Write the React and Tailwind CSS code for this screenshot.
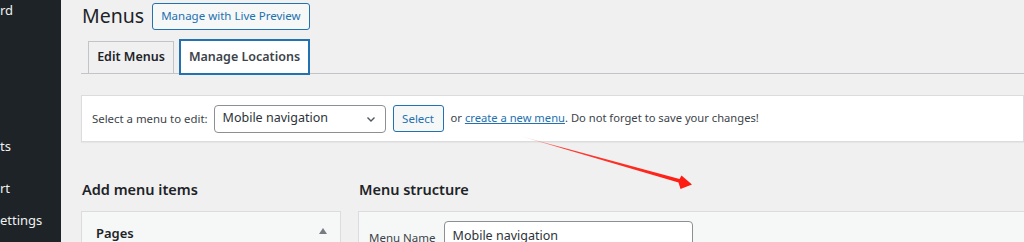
import React from "react";

const font = { fontFamily: '"Noto Sans", "Open Sans", sans-serif' };

function Sidebar() {
  return (
    <div className="relative w-[61px] shrink-0 overflow-hidden bg-[#1d2327] text-[13px] text-[#f0f0f1]">
      <div className="absolute left-0 top-[2px] leading-[16px]">rd</div>
      <div className="absolute left-0 top-[138px] leading-[16px]">ts</div>
      <div className="absolute left-0 top-[180px] leading-[16px]">rt</div>
      <div className="absolute left-0 top-[212px] leading-[16px]">ettings</div>
    </div>
  );
}

function Arrow() {
  return (
    <svg className="pointer-events-none absolute left-0 top-0" width="1024" height="242" viewBox="0 0 1024 242">
      <defs>
        <linearGradient id="ag" x1="520" y1="136" x2="692" y2="184" gradientUnits="userSpaceOnUse">
          <stop offset="0" stopColor="#ff3b2f" stopOpacity="0.15" />
          <stop offset="0.25" stopColor="#ff2a1f" stopOpacity="0.9" />
          <stop offset="1" stopColor="#ff1a10" />
        </linearGradient>
      </defs>
      <path d="M520,136 L679.5,179 L681.5,175.5 L692,184.5 L680.5,189 L678.5,182.5 Z" fill="url(#ag)" />
    </svg>
  );
}

export default function App() {
  return (
    <div className="relative flex h-[242px] w-[1024px] overflow-hidden bg-[#f0f0f1]" style={font}>
      <Sidebar />
      <div className="flex min-w-0 flex-1 flex-col pl-[20px]">
        {/* title row */}
        <div className="flex h-[32px] shrink-0 items-center">
          <h1 className="ml-[1px] text-[19.5px] leading-[24px] font-normal text-[#1d2327]">Menus</h1>
          <button className="ml-[8px] h-[27px] rounded-[3px] border border-[#2271b1] bg-[#f6f7f7] px-[8px] text-[11.5px] text-[#2271b1]">
            Manage with Live Preview
          </button>
        </div>
        {/* tabs */}
        <div className="mt-[7px] flex h-[35px] shrink-0 items-end border-b border-[#c3c4c7] pl-[7px]">
          <div className="mb-[-1px] flex h-[33px] w-[86px] items-center justify-center border border-[#c3c4c7] bg-[#f0f0f1] text-[12.5px] font-semibold text-[#1d2327]">
            Edit Menus
          </div>
          <div className="mb-[-2px] ml-[5px] flex h-[36px] w-[131px] items-center justify-center border-2 border-[#2271b1] bg-white text-[12.5px] font-semibold text-[#3c434a]">
            Manage Locations
          </div>
        </div>
        {/* select panel */}
        <div className="mt-[21px] flex h-[47px] shrink-0 items-center border border-[#dcdcde] bg-white pl-[10px] text-[11.4px] text-[#3c434a] shadow-[0_1px_1px_rgba(0,0,0,0.04)]">
          <span>Select a menu to edit:</span>
          <div className="ml-[6px] flex h-[28px] w-[172px] items-center justify-between rounded-[4px] border border-[#8c8f94] bg-white pl-[8px] pr-[8px] text-[12.5px] text-[#2c3338]">
            <span>Mobile navigation</span>
            <svg width="12" height="12" viewBox="0 0 12 12" fill="none" stroke="#50575e" strokeWidth="1.4">
              <path d="M2.5 4.5 L6 8 L9.5 4.5" />
            </svg>
          </div>
          <button className="ml-[7px] h-[27px] w-[51px] rounded-[3px] border border-[#2271b1] bg-[#f6f7f7] text-[11.5px] text-[#2271b1]">
            Select
          </button>
          <span className="ml-[7px] text-[11.2px]">
            or{" "}
            <a className="text-[#2271b1] underline" href="#">
              create a new menu
            </a>
            . Do not forget to save your changes!
          </span>
        </div>
        {/* columns */}
        <div className="mt-[37px] flex shrink-0">
          <div className="w-[260px] shrink-0">
            <h2 className="ml-[1px] h-[32px] text-[14.5px] leading-[20px] font-semibold text-[#1d2327]">Add menu items</h2>
            <div className="h-[40px] border border-[#dcdcde] bg-[#f6f7f7]">
              <div className="flex h-[30px] items-end justify-between pl-[14px] pr-[13px]">
                <span className="text-[13px] leading-[18px] font-semibold text-[#1d2327]">Pages</span>
                <svg width="8" height="6" viewBox="0 0 8 6" className="mb-[8px]">
                  <path d="M0 6 L4 0 L8 6 Z" fill="#787c82" />
                </svg>
              </div>
            </div>
          </div>
          <div className="ml-[17px] min-w-0 flex-1">
            <h2 className="ml-[1px] h-[32px] text-[14.5px] leading-[20px] font-semibold text-[#1d2327]">Menu structure</h2>
            <div className="h-[40px] border border-r-0 border-[#dcdcde] bg-[#f6f7f7]">
              <div className="flex items-start pl-[10px] pt-[9px]">
                <span className="mt-[9px] text-[11.5px] leading-[16px] text-[#3c434a]">Menu Name</span>
                <div className="ml-[8px] h-[30px] w-[249px] rounded-[4px] border border-[#8c8f94] bg-white pl-[8px] pt-[6px] text-[12.5px] leading-[16px] text-[#2c3338]">
                  Mobile navigation
                </div>
              </div>
            </div>
          </div>
        </div>
      </div>
      <Arrow />
    </div>
  );
}
